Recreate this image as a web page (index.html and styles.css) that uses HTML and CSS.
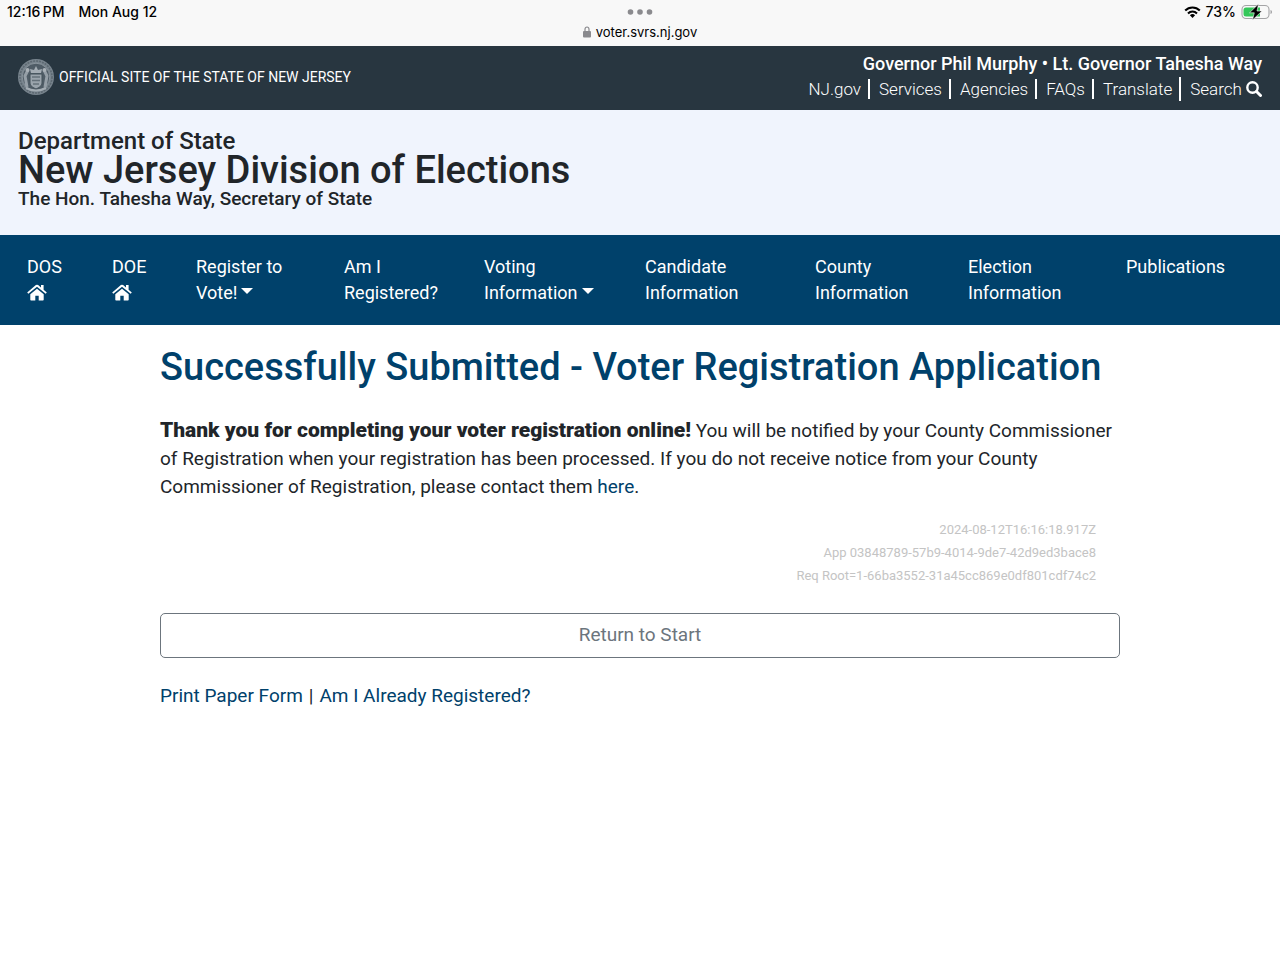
FILE: index.html
```html
<!DOCTYPE html>
<html lang="en">
  <head>
    <meta charset="utf-8">
    <meta name="viewport" content="width=device-width, initial-scale=1.0">
    <title>NJ Voter Registration</title>
    <link rel="stylesheet" href="styles.css">
  </head>
  <body>
    <!-- Tablet status bar -->
    <div class="status">
      <div class="status-left"><span>12:16&#8201;PM</span><span>Mon Aug 12</span></div>
      <div class="status-center">
        <svg class="dots" width="26" height="6" viewBox="0 0 26 6"><circle cx="3.5" cy="3" r="2.8"/><circle cx="13" cy="3" r="2.8"/><circle cx="22.5" cy="3" r="2.8"/></svg>
        <div class="address">
          <svg width="8" height="12" viewBox="0 0 8 12"><path d="M2 6V3.3a2 2.3 0 0 1 4 0V6" fill="none" stroke="#8a8a8e" stroke-width="1.2"/><rect y="5" width="8" height="6.5" rx="1" fill="#8a8a8e"/></svg>
          <span>voter.svrs.nj.gov</span>
        </div>
      </div>
      <div class="status-right">
        <svg width="17" height="12" viewBox="0 0 17 12"><g fill="none" stroke="#000" stroke-width="2.1"><path d="M1.2 4.5a10.3 10.3 0 0 1 14.6 0"/><path d="M4 7.4a6.4 6.4 0 0 1 9 0"/></g><path d="M8.5 12L5.9 9.3a3.7 3.7 0 0 1 5.2 0z"/></svg>
        <span>73%</span>
        <svg width="32" height="16" viewBox="0 0 32 16"><rect x="1" y="1.500" width="27" height="13" rx="4" fill="none" stroke="#a4a4a6" stroke-width="1.1"/><path d="M5 3.500h14v9H5A2.500 2.500 0 0 1 2.500 10V6A2.500 2.500 0 0 1 5 3.500z" fill="#34c759"/><path d="M29.500 6v4c2-.6 2-3.400 0-4z" fill="#a4a4a6"/><path d="M17.500 0L8.500 8.800h4.800L11.500 16 21 7h-5z" stroke="#f8f8f8" stroke-width=".6"/></svg>
      </div>
    </div>

    <!-- State bar -->
    <div class="state">
      <div class="official">
        <svg width="36" height="36" viewBox="0 0 36 36">
          <circle cx="18" cy="18" r="18" fill="#78848d"/>
          <circle cx="18" cy="18" r="16" fill="none" stroke="#5d6972" stroke-width="1.600" stroke-dasharray="2 1"/>
          <circle cx="18" cy="18" r="13.800" fill="#4f5c66" stroke="#89949c"/>
          <path d="M12 15h12v9c0 3-3 4.500-6 6-3-1.500-6-3-6-6z" fill="#9aa4ac" stroke="#45525b"/>
          <path d="M14 18h8M14 21.500h8M15 25h6" stroke="#65717a" stroke-width="1.500"/>
          <path d="M13 14l-1-4 4 1 2-4 2 4 4-1-1 4z" fill="#a4adb4"/>
          <path d="M10 11l-3 6 2 11M26 11l3 6-2 11" fill="none" stroke="#959fa7" stroke-width="3"/>
          <circle cx="9.500" cy="11" r="2" fill="#a9b1b7"/><circle cx="26.500" cy="11" r="2" fill="#a9b1b7"/>
          <path d="M8 29q10 5 20 0" fill="none" stroke="#a4adb4" stroke-width="2"/>
        </svg>
        <span>OFFICIAL SITE OF THE STATE OF NEW JERSEY</span>
      </div>
      <div class="state-right">
        <div class="governor">Governor Phil Murphy &bull; Lt. Governor Tahesha Way</div>
        <ul class="state-links">
          <li><a href="#">NJ.gov</a></li>
          <li><a href="#">Services</a></li>
          <li><a href="#">Agencies</a></li>
          <li><a href="#">FAQs</a></li>
          <li><a href="#">Translate</a></li>
          <li class="search"><a href="#">Search <svg width="16" height="16" viewBox="0 0 16 16"><circle cx="6.500" cy="6.500" r="5.200" fill="none" stroke="#fff" stroke-width="2.400"/><path d="M10.500 10.500l4 4" stroke="#fff" stroke-width="3" stroke-linecap="round"/></svg></a></li>
        </ul>
      </div>
    </div>

    <!-- Department header -->
    <div class="header">
      <div class="department">Department of State</div>
      <div class="division">New Jersey Division of Elections</div>
      <div class="secretary">The Hon. Tahesha Way, Secretary of State</div>
    </div>

    <!-- Menu -->
    <nav class="menu">
      <a href="#">DOS<br><svg class="home" width="20" height="17" viewBox="0 0 20 17"><path d="M10 4.800L3.300 10.300v5.500q0 .8.800.8h4.200v-4.800h3.400v4.800h4.200q.8 0 .8-.8v-5.500z"/><path d="M.2 8.400L8.900 1.100q1.100-.9 2.200 0l2.900 2.400V1h2.600v4.700l3.200 2.700-1.100 1.300L10 2.800 1.300 9.700z"/></svg></a>
      <a href="#">DOE<br><svg class="home" width="20" height="17" viewBox="0 0 20 17"><path d="M10 4.800L3.300 10.300v5.500q0 .8.800.8h4.200v-4.800h3.400v4.800h4.200q.8 0 .8-.8v-5.500z"/><path d="M.2 8.400L8.900 1.100q1.100-.9 2.200 0l2.900 2.400V1h2.600v4.700l3.200 2.700-1.100 1.300L10 2.800 1.300 9.700z"/></svg></a>
      <a href="#">Register to<br><span class="drop">Vote!</span></a>
      <a href="#">Am I<br>Registered?</a>
      <a href="#">Voting<br><span class="drop">Information</span></a>
      <a href="#">Candidate<br>Information</a>
      <a href="#">County<br>Information</a>
      <a href="#">Election<br>Information</a>
      <a href="#">Publications</a>
    </nav>

    <!-- Confirmation -->
    <main class="content">
      <h1>Successfully Submitted - Voter Registration Application</h1>
      <p><b>Thank you for completing your voter registration online!</b> You will be notified by your County Commissioner of Registration when your registration has been processed. If you do not receive notice from your County Commissioner of Registration, please contact them <a href="#">here</a>.</p>
      <div class="request">
        2024-08-12T16:16:18.917Z<br>
        App 03848789-57b9-4014-9de7-42d9ed3bace8<br>
        Req Root=1-66ba3552-31a45cc869e0df801cdf74c2
      </div>
      <button type="button" class="return">Return to Start</button>
      <div class="links"><a href="#">Print Paper Form</a><span>|</span><a href="#">Am I Already Registered?</a></div>
    </main>
  </body>
</html>
```

FILE: styles.css
```css
* { box-sizing: border-box; }

body {
  margin: 0;
  background-color: #fff;
  color: #212529;
  font-family: Roboto, sans-serif;
  font-size: 19px;
  line-height: 28px;
}

a {
  color: #00416b;
  text-decoration: none;
}

.status {
  display: grid;
  grid-template-columns: 1fr auto 1fr;
  height: 46px;
  padding: 2px 7px 0;
  background-color: #f8f8f8;
  color: #000;
  font-family: Inter, sans-serif;
  font-size: 14px;
  font-weight: 500;
  line-height: 20px;
}

.status-left {
  display: flex;
  gap: 14px;
}

.status-center {
  display: flex;
  flex-direction: column;
  align-items: center;
  gap: 7px;
  padding-top: 7px;
  font-size: 13px;
  font-weight: 400;
}

.dots { fill: #8a8a8e; }

.address {
  display: flex;
  align-items: center;
  gap: 5px;
}

.status-right {
  display: flex;
  justify-content: flex-end;
  align-items: center;
  gap: 5px;
  height: 20px;
}

.state {
  display: flex;
  justify-content: space-between;
  align-items: center;
  height: 64px;
  padding: 0 18px 2px;
  background-color: #283640;
  color: #fff;
}

.official {
  display: flex;
  align-items: center;
  gap: 5px;
  font-size: 14px;
}

.state-right { padding-bottom: 2px; }

.governor {
  font-size: 18px;
  font-weight: 500;
  line-height: 26px;
  text-align: right;
}

.state-links {
  display: flex;
  justify-content: flex-end;
  align-items: center;
  height: 25px;
  margin: 0;
  padding: 0;
  list-style: none;
  font-size: 17px;
  font-weight: 300;
  line-height: 20px;
}

.state-links li + li {
  margin-left: 7px;
  padding-left: 9px;
  border-left: 2px solid #fff;
}

.state-links .search { line-height: 24px; }
.state-links a { color: #fff; }
.state-links svg { vertical-align: -2px; }

.header {
  padding: 19px 18px 25px;
  background-color: #f0f4fd;
  font-weight: 500;
}

.department {
  font-size: 24px;
  line-height: 24px;
}

.division {
  font-size: 38px;
  line-height: 34px;
}

.secretary {
  font-size: 19px;
  line-height: 23px;
}

.menu {
  display: grid;
  grid-template-columns: 85fr 84fr 148fr 140fr 161fr 170fr 153fr 158fr 127fr;
  padding: 19px 27px;
  background-color: #00416b;
  font-size: 18px;
  line-height: 26px;
}

.menu a { color: #fff; }

.home {
  fill: #fff;
  vertical-align: -2px;
}

.drop::after {
  content: "";
  display: inline-block;
  margin-left: 4px;
  vertical-align: 5px;
  border-top: 6px solid #fff;
  border-left: 6px solid transparent;
  border-right: 6px solid transparent;
}

.content {
  width: 75%;
  margin: 0 auto;
  padding-top: 20px;
}

h1 {
  margin: 0 0 28px;
  color: #00416b;
  font-size: 38px;
  font-weight: 500;
  line-height: 44px;
}

p { margin: 0 0 17px; }

b {
  font-size: 21px;
  font-weight: 900;
  line-height: 20px;
}

.request {
  padding-right: 24px;
  color: #c4c4c4;
  font-size: 13px;
  line-height: 23px;
  text-align: right;
}

.return {
  display: block;
  width: 100%;
  height: 45px;
  margin: 26px 0 24px;
  padding-bottom: 3px;
  border: 1px solid #6c757d;
  border-radius: 5px;
  background-color: #fff;
  color: #6c757d;
  font-family: Roboto, sans-serif;
  font-size: 19px;
}

.links {
  display: flex;
  gap: 6px;
}
```
